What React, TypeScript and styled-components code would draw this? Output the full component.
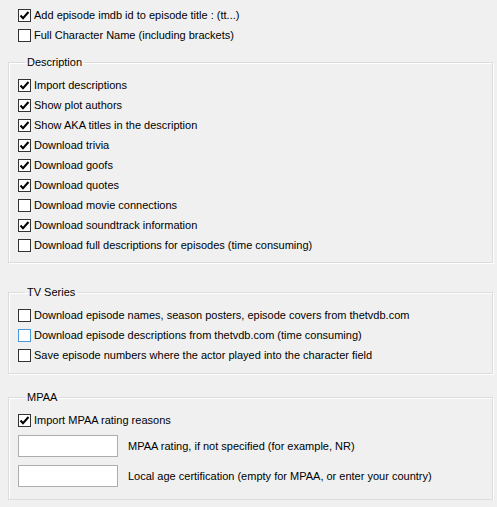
import React from 'react';
import styled, { createGlobalStyle } from 'styled-components';

const GlobalStyle = createGlobalStyle`
    body {
        margin: 0;
        background: #f0f0f0;
        font-family: "Liberation Sans", Arial, sans-serif;
        font-size: 11px;
        color: #000;
    }
`;

// Whole dialog page
const Page = styled.div`
    display: flex;
    flex-direction: column;
    padding: 5px 4px 0 8px;
    width: 485px;
`;

const TopOptions = styled.div`
    display: flex;
    flex-direction: column;
    padding-left: 10px;
`;

const GroupBox = styled.fieldset<{ $gapTop: number; $padBottom: number }>`
    margin: ${props => props.$gapTop}px 0 0 0;
    padding: 5px 8px ${props => props.$padBottom}px 9px;
    border: 1px solid #dcdcdc;
    box-shadow: 1px 1px 0 #fff, inset 1px 1px 0 #fff;
    display: flex;
    flex-direction: column;
    min-width: 0;
`;

const Legend = styled.legend`
    margin-left: 7px;
    padding: 0 2px;
    line-height: 16px;
`;

const Row = styled.label`
    display: flex;
    align-items: center;
    height: 20px;
    gap: 3px;
    white-space: nowrap;
`;

const Box = styled.span<{ $hover?: boolean }>`
    box-sizing: border-box;
    width: 13px;
    height: 13px;
    flex: none;
    border: 1px solid ${props => (props.$hover ? '#4a97dc' : '#333')};
    background: #fff;
    display: flex;
    align-items: center;
    justify-content: center;
`;

const InputRow = styled.div<{ $gapTop: number }>`
    display: flex;
    align-items: center;
    gap: 10px;
    margin-top: ${props => props.$gapTop}px;
`;

const TextBox = styled.input`
    box-sizing: border-box;
    width: 100px;
    height: 22px;
    margin: 0;
    border: 1px solid #adadad;
    background: #fff;
    font: inherit;
    padding: 0 3px;
    outline: none;
`;

const Check = ({ checked, hover, children }: { checked?: boolean; hover?: boolean; children: React.ReactNode }) => (
    <Row>
        <Box $hover={hover}>
            {checked && (
                <svg width="11" height="11" viewBox="0 0 11 11">
                    <path d="M1.5 5.5 L4 8.2 L9.5 2" fill="none" stroke="#000" strokeWidth="2" />
                </svg>
            )}
        </Box>
        {children}
    </Row>
);

const App = () => {
    return (
        <Page>
            <GlobalStyle />
            <TopOptions>
                <Check checked>Add episode imdb id to episode title : (tt...)</Check>
                <Check>Full Character Name (including brackets)</Check>
            </TopOptions>

            <GroupBox $gapTop={9} $padBottom={7}>
                <Legend>Description</Legend>
                <Check checked>Import descriptions</Check>
                <Check checked>Show plot authors</Check>
                <Check checked>Show AKA titles in the description</Check>
                <Check checked>Download trivia</Check>
                <Check checked>Download goofs</Check>
                <Check checked>Download quotes</Check>
                <Check>Download movie connections</Check>
                <Check checked>Download soundtrack information</Check>
                <Check>Download full descriptions for episodes (time consuming)</Check>
            </GroupBox>

            <GroupBox $gapTop={21} $padBottom={8}>
                <Legend>TV Series</Legend>
                <Check>Download episode names, season posters, episode covers from thetvdb.com</Check>
                <Check hover>Download episode descriptions from thetvdb.com (time consuming)</Check>
                <Check>Save episode numbers where the actor played into the character field</Check>
            </GroupBox>

            <GroupBox $gapTop={15} $padBottom={12}>
                <Legend>MPAA</Legend>
                <Check checked>Import MPAA rating reasons</Check>
                <InputRow $gapTop={5}>
                    <TextBox />
                    MPAA rating, if not specified (for example, NR)
                </InputRow>
                <InputRow $gapTop={8}>
                    <TextBox />
                    Local age certification (empty for MPAA, or enter your country)
                </InputRow>
            </GroupBox>
        </Page>
    );
};

export default App;
